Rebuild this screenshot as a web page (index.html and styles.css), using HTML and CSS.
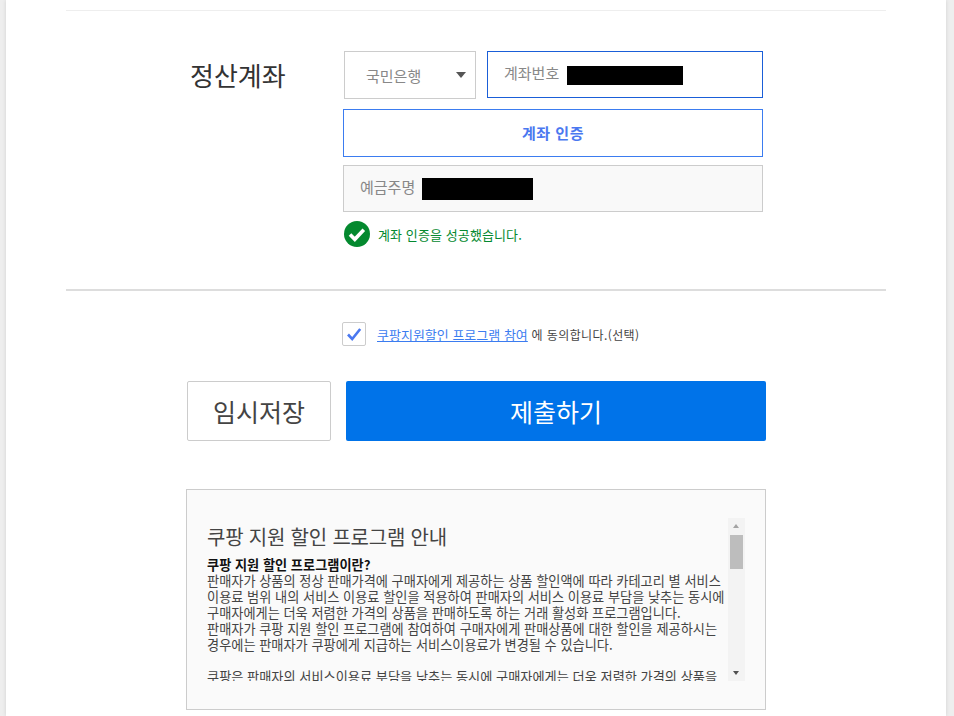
FILE: index.html
```html
<!DOCTYPE html>
<html lang="ko">
<head>
<meta charset="utf-8">
<title>정산계좌</title>
<link rel="stylesheet" href="styles.css">
</head>
<body>
<main class="panel">
  <div class="rule rule-top"></div>
  <section class="account">
    <h2 class="account-label">정산계좌</h2>
    <div class="account-fields">
      <div class="row-bank">
        <div class="select"><span>국민은행</span><i class="caret"></i></div>
        <div class="input input-focus"><span class="field-name">계좌번호</span><b class="mask mask-number"></b></div>
      </div>
      <button class="verify">계좌 인증</button>
      <div class="input input-read"><span class="field-name">예금주명</span><b class="mask mask-name"></b></div>
      <div class="success">
        <svg class="success-icon" viewBox="0 0 26 26" width="26" height="26"><circle cx="13" cy="13" r="13" fill="#04892f"/><path d="M6 13.5l4.8 4.8 9-9.6" fill="none" stroke="#fff" stroke-width="3.6"/></svg>
        <span>계좌 인증을 성공했습니다.</span>
      </div>
    </div>
  </section>
  <div class="rule rule-mid"></div>
  <div class="agree">
    <span class="checkbox"><svg viewBox="0 0 24 24" width="24" height="24"><path d="M6 12.5l4.2 4.5 8-10" fill="none" stroke="#4a78f0" stroke-width="2.6"/></svg></span>
    <span class="agree-text"><a href="#">쿠팡지원할인 프로그램 참여</a><span class="agree-rest"> 에 동의합니다.(선택)</span></span>
  </div>
  <div class="actions">
    <button class="btn-save">임시저장</button>
    <button class="btn-submit">제출하기</button>
  </div>
  <section class="notice">
    <div class="notice-view">
      <div class="notice-text">
        <h3>쿠팡 지원 할인 프로그램 안내</h3>
        <strong>쿠팡 지원 할인 프로그램이란?</strong>
        <p>판매자가 상품의 정상 판매가격에 구매자에게 제공하는 상품 할인액에 따라 카테고리 별 서비스<br>이용료 범위 내의 서비스 이용료 할인을 적용하여 판매자의 서비스 이용료 부담을 낮추는 동시에<br>구매자에게는 더욱 저렴한 가격의 상품을 판매하도록 하는 거래 활성화 프로그램입니다.<br>판매자가 쿠팡 지원 할인 프로그램에 참여하여 구매자에게 판매상품에 대한 할인을 제공하시는<br>경우에는 판매자가 쿠팡에게 지급하는 서비스이용료가 변경될 수 있습니다.<br><br>쿠팡은 판매자의 서비스이용료 부담을 낮추는 동시에 구매자에게는 더욱 저렴한 가격의 상품을</p>
      </div>
      <div class="scrollbar">
        <i class="arrow-up"></i>
        <i class="thumb"></i>
        <i class="arrow-down"></i>
      </div>
    </div>
  </section>
</main>
</body>
</html>
```
FILE: styles.css
```css
* { box-sizing: border-box; }
html, body { margin: 0; height: 716px; overflow: hidden; }
body {
  background: #eee;
  font-family: "Noto Sans CJK KR", "Noto Sans", sans-serif;
  color: #333;
}
.panel {
  width: 940px;
  height: 716px;
  margin-left: 6px;
  padding: 10px 60px 0;
  background: #fff;
  box-shadow: 0 0 4px rgba(0,0,0,.12);
  overflow: hidden;
}
.rule { background: #eee; height: 1px; }
.rule-mid { background: #ddd; height: 2px; margin-top: 42px; }

.account { display: flex; padding: 40px 0 0 124px; }
.account-label {
  width: 153px;
  margin: 6px 0 0;
  font-size: 26px;
  line-height: 36px;
  font-weight: 400;
  color: #333;
}
.account-fields { width: 420px; display: flex; flex-direction: column; }
.row-bank { display: flex; gap: 11px; padding-left: 1px; }
.select {
  width: 132px;
  height: 48px;
  border: 1px solid #ccc;
  padding: 0 9px 0 21px;
  display: flex;
  align-items: center;
  justify-content: space-between;
  font-size: 15px;
  color: #888;
}
.caret { width: 0; height: 0; border: 5.5px solid transparent; border-top: 6px solid #555; border-bottom: 0; }
.input {
  display: flex;
  align-items: center;
  font-size: 15px;
  color: #888;
  border: 1px solid #ccc;
}
.field-name { margin-top: -4px; }
.input-focus { width: 276px; height: 47px; border-color: #1a5ed8; padding-left: 16px; gap: 8px; }
.input-read { height: 47px; margin-top: 8px; background: #f9f9f9; padding-left: 16px; gap: 7px; }
.mask { display: block; background: #000; }
.mask-number { width: 116px; height: 19px; margin-top: 2px; }
.mask-name { width: 111px; height: 22px; margin-top: 1px; }
.verify {
  height: 48px;
  margin-top: 10px;
  padding: 0 0 2px;
  border: 1px solid #3b7cf0;
  background: #fff;
  color: #4a78f0;
  font: 700 15px "Noto Sans CJK KR", sans-serif;
  letter-spacing: .5px;
}
.success { display: flex; align-items: center; gap: 8px; margin-top: 9px; padding-left: 1px; font-size: 13px; letter-spacing: .1px; color: #04892f; }
.success-icon { display: block; flex: none; }

.agree { display: flex; align-items: center; gap: 11px; margin-top: 31px; padding-left: 276px; font-size: 13px; color: #444; }
.checkbox { width: 24px; height: 24px; border: 1px solid #ccc; border-radius: 2px; display: flex; align-items: center; justify-content: center; }
.checkbox svg { display: block; flex: none; }
.agree-text a { color: #3b7cf0; }
.agree-rest { font-size: 12px; letter-spacing: .4px; }

.actions { display: flex; gap: 15px; margin-top: 35px; padding-left: 121px; }
.btn-save, .btn-submit { height: 60px; font-family: "Noto Sans CJK KR", sans-serif; font-size: 25px; font-weight: 400; border-radius: 2px; }
.btn-save { width: 144px; background: #fff; border: 1px solid #ccc; color: #444; }
.btn-submit { width: 420px; background: #0073e9; border: 0; color: #fff; }

.notice { width: 580px; height: 221px; margin: 48px 0 0 120px; background: #fafafa; border: 1px solid #ccc; padding: 28px 20px 0; }
.notice-view { display: flex; height: 163px; }
.notice-text { width: 521px; overflow: hidden; font-size: 13.2px; line-height: 16px; color: #444; }
.notice-text h3 { margin: 7px 0 8px; font-size: 20px; line-height: 24px; letter-spacing: -.2px; font-weight: 400; color: #444; }
.notice-text strong { display: block; font-size: 13.2px; font-weight: 700; color: #111; }
.notice-text p { margin: 0; }
.scrollbar { width: 17px; background: #f3f3f3; position: relative; flex: none; }
.thumb { position: absolute; left: 2px; top: 17px; width: 13px; height: 34px; background: #bdbdbd; }
.arrow-up, .arrow-down { position: absolute; left: 5px; width: 0; height: 0; border: 3.5px solid transparent; }
.arrow-up { top: 6px; border-top: 0; border-bottom: 4px solid #a3a3a3; }
.arrow-down { bottom: 6px; border-bottom: 0; border-top: 4px solid #505050; }
```
